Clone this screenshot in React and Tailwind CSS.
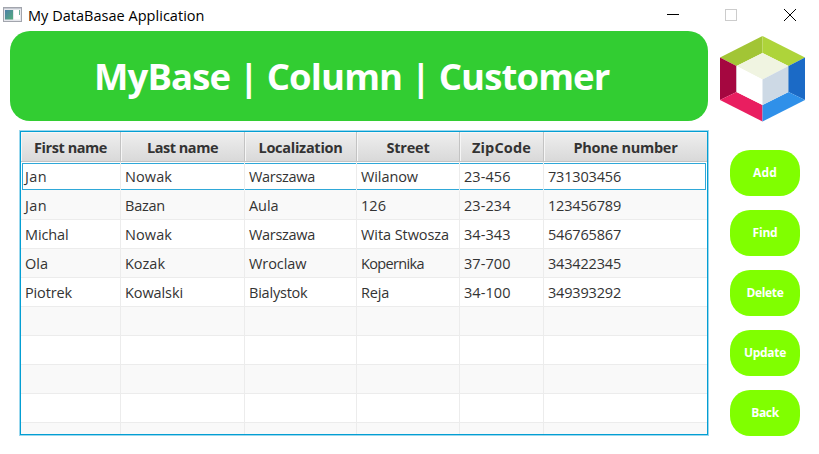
import { useLayoutEffect, useRef, useState } from "react";

// Text label that adjusts its letter spacing to occupy the given width.
function Label({ text, width, className = "" }) {
  const ref = useRef(null);
  const [spacing, setSpacing] = useState(0);
  useLayoutEffect(() => {
    const natural = ref.current.getBoundingClientRect().width;
    setSpacing((width - natural) / text.length);
  }, [text, width]);
  return (
    <span ref={ref} className={`inline-block whitespace-pre ${className}`} style={{ letterSpacing: `${spacing}px` }}>
      {text}
    </span>
  );
}

const columns = [
  ["First name", 73],
  ["Last name", 71],
  ["Localization", 84],
  ["Street", 43],
  ["ZipCode", 59],
  ["Phone number", 104],
];

const rows = [
  [["Jan", 22], ["Nowak", 47], ["Warszawa", 66], ["Wilanow", 57], ["23-456", 46.5], ["731303456", 73]],
  [["Jan", 22], ["Bazan", 40], ["Aula", 29.5], ["126", 25], ["23-234", 46.5], ["123456789", 73]],
  [["Michal", 43.5], ["Nowak", 47], ["Warszawa", 66], ["Wita Stwosza", 88], ["34-343", 46.5], ["546765867", 73]],
  [["Ola", 23], ["Kozak", 40], ["Wroclaw", 57.5], ["Kopernika", 63], ["37-700", 46.5], ["343422345", 73]],
  [["Piotrek", 47], ["Kowalski", 58], ["Bialystok", 58.5], ["Reja", 28], ["34-100", 46.5], ["349393292", 73]],
  [], [], [], [], [],
];

const actions = [["Add", 24], ["Find", 25], ["Delete", 37], ["Update", 42], ["Back", 27.5]];

const grid = "grid grid-cols-[100px_124px_112px_103px_84px_163px]";

function TitleBar() {
  return (
    <header className="flex h-[31px] items-center pl-[3px]">
      <svg width="19" height="15" viewBox="0 0 19 15" className="mb-[2px]">
        <defs>
          <linearGradient id="pane" x1="0" y1="0" x2="1" y2="1">
            <stop offset="0" stopColor="#4c7fa8" />
            <stop offset="1" stopColor="#54ad7c" />
          </linearGradient>
        </defs>
        <rect x="0.5" y="0.5" width="18" height="14" fill="#e6e7ec" stroke="#a2a5ad" />
        <path d="M1 1.5h17" stroke="#c3c7d0" />
        <rect x="2" y="3" width="8" height="9.5" fill="url(#pane)" />
        <rect x="11" y="3" width="6" height="9.5" fill="#fff" />
        <path d="M16.5 3v5" stroke="#6fae9c" />
      </svg>
      <div className="ml-[6px] text-[14.5px] leading-5 text-black">
        <Label text="My DataBasae Application" width={176.5} />
      </div>
      <div className="ml-auto flex items-center pr-[23px]">
        <svg width="130" height="14" viewBox="0 0 130 14" fill="none" shapeRendering="crispEdges" className="mb-px">
          <path d="M1 6.5h12" stroke="#000" />
          <rect x="59.5" y="1.5" width="11" height="11" stroke="#ccc" />
          <path d="M118 1l12 12M130 1l-12 12" stroke="#000" shapeRendering="auto" />
        </svg>
      </div>
    </header>
  );
}

function Logo() {
  return (
    <svg width="85" height="86" viewBox="0 0 85 86">
      <path d="M0 21.5L42.5 0v17L16.5 30z" fill="#a2c535" />
      <path d="M42.5 0L85 21.5 68.5 30l-26-13z" fill="#aed43a" />
      <path d="M0 21.5L16.5 30v26L0 64z" fill="#a50740" />
      <path d="M0 64l16.5-8 26 13v16.5z" fill="#e91e60" />
      <path d="M85 21.5L68.5 30v26L85 64z" fill="#1b6ac6" />
      <path d="M85 64l-16.5-8-26 13v16.5z" fill="#2f90e9" />
      <path d="M42.5 17l26 13-26 13.5L16.5 30z" fill="#f0f4e1" />
      <path d="M16.5 30l26 13.5V69l-26-13z" fill="#fff" />
      <path d="M68.5 30l-26 13.5V69l26-13z" fill="#cdd9e5" />
      <path d="M16.5 30v26" stroke="#d9bcc8" />
      <path d="M68.5 30v26" stroke="#6e9fd3" />
    </svg>
  );
}

function Row({ cells, index }) {
  const focused = index === 0;
  return (
    <div className={`${grid} h-[29px] shrink-0 ${index % 2 ? "bg-[#f9f9f9]" : "bg-white"}`}>
      {columns.map(([name], i) => {
        const first = i === 0;
        const last = i === columns.length - 1;
        return (
          <div
            key={name}
            className={`flex flex-col border-b ${focused ? "border-b-[#f9f9f9]" : "border-b-[#ececec]"} ${last ? "" : "border-r border-r-[#ececec]"}`}
          >
            <div
              className={`mt-px flex h-[27px] items-center ${focused ? "border-y border-[#2fa8d8]" : ""} ${
                focused && first ? "ml-px border-l pl-[2px]" : "pl-1"
              } ${focused && last ? "mr-px border-r" : ""}`}
            >
              {cells[i] && <Label text={cells[i][0]} width={cells[i][1]} />}
            </div>
          </div>
        );
      })}
    </div>
  );
}

function Table() {
  return (
    <div className="mt-[10px] ml-[10px] flex h-[304px] w-[688px] flex-col overflow-hidden border border-[#039ed3] text-[14.5px] leading-5 text-[#333] shadow-[0_0_0_1px_#9bd8ee]">
      <div className={`${grid} h-[30px] shrink-0 border-b border-[#c3c3c3] bg-linear-to-b from-[#efefef] to-[#d9d9d9] font-bold`}>
        {columns.map(([name, width], i) => (
          <div
            key={name}
            className={`flex items-center justify-center pt-[2px] shadow-[inset_1px_1px_0_#f6f6f6] ${i < 5 ? "border-r border-[#c3c3c3]" : ""}`}
          >
            <Label text={name} width={width} />
          </div>
        ))}
      </div>
      {rows.map((cells, i) => (
        <Row key={i} cells={cells} index={i} />
      ))}
    </div>
  );
}

export default function App() {
  return (
    <div className="h-[454px] w-[819px] overflow-hidden bg-white font-['Open_Sans','Noto_Sans',sans-serif]">
      <TitleBar />
      <div className="flex pl-[10px]">
        <main className="w-[698px]">
          <h1 className="flex h-[90px] items-center rounded-[20px] bg-[#32cd32] pl-[84px] text-[36.5px] leading-none font-bold text-white">
            <Label text="MyBase | Column | Customer" width={515.5} />
          </h1>
          <Table />
        </main>
        <aside className="ml-[12px] flex w-[86px] flex-col pt-[5px]">
          <Logo />
          <div className="mt-[28px] ml-[10px] flex flex-col gap-[14px]">
            {actions.map(([name, width]) => (
              <button
                key={name}
                className="flex h-[46px] w-[70px] items-center justify-center rounded-[20px] bg-[#80ff00] text-[12px] font-bold text-white"
              >
                <Label text={name} width={width} />
              </button>
            ))}
          </div>
        </aside>
      </div>
    </div>
  );
}
